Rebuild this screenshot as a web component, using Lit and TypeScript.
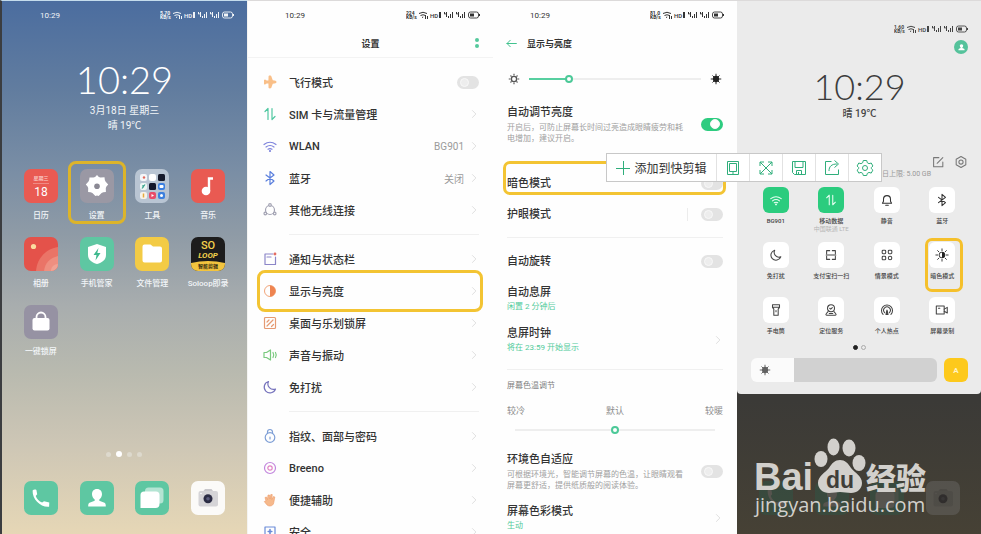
import { LitElement, html, svg, css, nothing } from "lit";
import { customElement, property } from "lit/decorators.js";
import { classMap } from "lit/directives/class-map.js";
import { styleMap } from "lit/directives/style-map.js";

const base = css`
  * { box-sizing: border-box; }
  button { font: inherit; color: inherit; background: none; border: 0; padding: 0; margin: 0; text-align: left; }
  svg { display: block; flex: none; }
`;

/* Artwork for the 34px launcher tiles */
const tileArt: Record<string, unknown> = {
  calendar: svg`<rect width="34" height="34" rx="7" fill="#e95a52"/>
    <text x="17" y="11" font-size="5" text-anchor="middle" fill="#fbd3cf">星期三</text>
    <path d="M9 14.5h16" stroke="#f3a19b" stroke-width=".7"/>
    <text x="17" y="27" font-size="12" font-weight="400" text-anchor="middle" fill="#fff">18</text>`,
  settings: svg`<rect width="34" height="34" rx="7" fill="#9a98a4"/>
    <path d="M17 6q2 2.600 3.600 2.500l3.900-.2q.1 3 1 4.100l2.700 3q-2.300 2-2.400 3.600l.1 3.900q-3 .1-4.300 1.100L18.600 27q-1.600-.8-3.200 0l-3-2.900q-1.300-1-4.300-1.100l.1-3.900q-.1-1.600-2.400-3.600l2.700-3q.9-1.100 1-4.100l3.900.2Q15 8.600 17 6z" fill="#fff"/>
    <circle cx="17" cy="17.200" r="2.800" fill="#8b8994"/>`,
  tools: svg`<rect width="34" height="34" rx="7" fill="#b9c5d3"/>
    <g><rect x="5" y="5" width="7" height="7" rx="2" fill="#f4f6f8"/><rect x="14" y="5" width="7" height="7" rx="2" fill="#fff"/><rect x="23" y="5" width="7" height="7" rx="1.5" fill="#161a2b"/>
    <rect x="5" y="14" width="7" height="7" rx="2" fill="#eef6f4"/><rect x="14" y="14" width="7" height="7" rx="1.5" fill="#12162a"/><rect x="23" y="14" width="7" height="7" rx="2" fill="#3c7fe0"/>
    <rect x="5" y="23" width="7" height="7" rx="2" fill="#f7f3ea"/><rect x="14" y="23" width="7" height="7" rx="2" fill="#e94b68"/><rect x="23" y="23" width="7" height="7" rx="2" fill="#3d80dd"/></g>
    <circle cx="9" cy="8.5" r="1.2" fill="#e0695c"/><path d="M7 19.5l3-4M8 16v3" stroke="#3ba58f" stroke-width="1.2"/><rect x="24.500" y="16" width="4" height="3" rx="1" fill="#fff"/>
    <path d="M8.500 24.500v4" stroke="#e6a93c" stroke-width="1.500"/><path d="M16.500 25v3l2.500-1.500z" fill="#fff"/><circle cx="26.500" cy="26.500" r="1.500" fill="#fff"/>`,
  music: svg`<rect width="34" height="34" rx="7" fill="#e95a52"/>
    <circle cx="15" cy="22" r="4.300" fill="#fff"/><path d="M18 22V9.500h4" stroke="#fff" stroke-width="2.400" fill="none"/>`,
  album: svg`<rect width="34" height="34" rx="7" fill="#e4524a"/>
    <path d="M12 34c1-13 10-22 22-24v17a7 7 0 0 1-7 7z" fill="#ea7467"/><path d="M20 34c1-8 6-13 14-15v8a7 7 0 0 1-7 7z" fill="#ee8f80"/>
    <path d="M27 34c0-4 3-7 7-7a7 7 0 0 1-7 7z" fill="#f0a394"/><circle cx="9.500" cy="9.500" r="2.600" fill="#fbdca0"/>`,
  guard: svg`<rect width="34" height="34" rx="7" fill="#5ec7a2"/>
    <path d="M17 7l9 3v8c0 5-4 7.500-9 9-5-1.500-9-4-9-9v-8z" fill="#fff"/><path d="M18.500 11l-5 7h3l-1 5.500 5-7.500h-3.200z" fill="#3fb98e"/>`,
  files: svg`<rect width="34" height="34" rx="7" fill="#f3cb45"/>
    <path d="M7.500 9.500a2 2 0 0 1 2-2h6l2.500 2h7a2 2 0 0 1 2 2v12a2 2 0 0 1-2 2H9.500a2 2 0 0 1-2-2z" fill="#fff"/>`,
  soloop: svg`<rect width="34" height="34" rx="7" fill="#1d1c1c"/>
    <path d="M0 26q17-4 34 0v1a7 7 0 0 1-7 7H7a7 7 0 0 1-7-7z" fill="#f3c43e"/>
    <text x="17" y="12" font-size="11" font-weight="500" text-anchor="middle" fill="#f3d14c">SO</text>
    <text x="17" y="21" font-size="8" font-weight="700" font-style="italic" text-anchor="middle" fill="#f3d14c">LOOP</text>
    <text x="17" y="31" font-size="5" font-weight="700" text-anchor="middle" fill="#3a2f12">智能剪辑</text>`,
  lock: svg`<rect width="34" height="34" rx="7" fill="#9692a3"/>
    <path d="M12.500 14v-2a4.500 4.500 0 0 1 9 0v2" stroke="#fff" stroke-width="1.800" fill="none"/><rect x="8.500" y="13" width="17" height="12.500" rx="2" fill="#fff"/>`,
  phone: svg`<rect width="34" height="34" rx="7" fill="#5ec7a2"/>
    <path d="M8.600 9.500c.9-.9 2.400-1.200 3.800-.6l.8 4.300-1.500 1.700c1.300 3.100 3.300 5.200 6.400 6.600l1.900-1.300 5.300 1.300-.2 4.200C16.500 26.500 8.300 18.500 8.600 9.500z" fill="#fff"/>`,
  contacts: svg`<rect width="34" height="34" rx="7" fill="#5ec7a2"/>
    <path d="M17 8c3.400 0 5 2.300 5 5.200 0 2.300-1.200 4-2.700 5.300v1.300l5.200 2c1 .5 1.300 1.500 1.300 3.700H8.200c0-2.200.3-3.200 1.300-3.700l5.200-2v-1.300C13.200 17.200 12 15.500 12 13.200 12 10.300 13.600 8 17 8z" fill="#fff"/>`,
  messages: svg`<rect width="34" height="34" rx="7" fill="#5ec7a2"/>
    <rect x="10" y="6.500" width="18.500" height="16" rx="3.500" fill="#b4e4d3"/><path d="M9 10.500h12a3.500 3.500 0 0 1 3.500 3.500v9a4 4 0 0 1-4 4H5.500V14A3.500 3.500 0 0 1 9 10.500z" fill="#fff"/>`,
  camera: svg`<rect width="34" height="34" rx="7" fill="#fbfaf8"/>
    <rect x="7.500" y="10" width="19.500" height="15.500" rx="2" fill="#d5d4d7"/><path d="M12.500 10l1.500-2h6.500l1.500 2z" fill="#c8c7cb"/><circle cx="17" cy="17.700" r="4.500" fill="#2b2c44"/><circle cx="17" cy="17.700" r="1.800" fill="#5a5c7c"/><circle cx="10" cy="12.500" r=".8" fill="#fff"/>`,
};

const line = (color: string, body: unknown) =>
  svg`<g fill="none" stroke=${color} stroke-width="1.200" stroke-linecap="round" stroke-linejoin="round">${body}</g>`;

const wifi = svg`<path d="M2 6.500q6-4.500 12 0M4 9q4-3 8 0M6 11.200q2-1.300 4 0"/><circle cx="8" cy="13" r=".5"/>`;
const bluetooth = svg`<path d="M4 5l8 6-4 3.500v-13L12 5l-8 6"/>`;
const updown = svg`<path d="M3 5.500l3-3v11M13 10.500l-3 3v-11"/>`;
const moon = svg`<path d="M6.500 2.500a5.800 5.800 0 1 0 7 7.500 5.500 5.500 0 0 1-7-7.500z"/>`;

/* 16-unit line icons */
const icons: Record<string, unknown> = {
  plane: svg`<path d="M8 1.500c1.200 0 1.600 1.400 1.700 3.700l4.300 1.600c.6.900.6 1.800 0 2.600l-4.400.2-.2 1.700 1.200 1.600c0 .6-.2.900-.6 1.100H6c-.4-.2-.6-.5-.6-1.100l1.200-1.600-.2-1.700-4.400-.2c-.6-.8-.6-1.700 0-2.600l4.300-1.600C6.400 2.900 6.800 1.500 8 1.500z" fill="#f9bf88" transform="rotate(90 8 8)"/>`,
  sim: line("#4fc7a0", updown),
  wifi: line("#7d83dc", wifi),
  bluetooth: line("#5c80dd", bluetooth),
  other: line("#a3a3b3", svg`<circle cx="8" cy="8" r="4.500"/><circle cx="8" cy="3" r="1.300" fill="#fff"/><circle cx="3.300" cy="11.500" r="1.300" fill="#fff"/><circle cx="12.700" cy="11.500" r="1.300" fill="#fff"/>`),
  notice: line("#8c86c8", svg`<path d="M11 3H3v10.500h10.500V6M5 6h4"/><circle cx="13" cy="3" r=".8" stroke="#e4695e" fill="#e4695e"/>`),
  display: svg`<circle cx="8" cy="8" r="5.500" fill="none" stroke="#f2a67b"/><path d="M8 2.500a5.500 5.500 0 0 1 0 11z" fill="#ee8450"/>`,
  desktop: line("#e59a72", svg`<rect x="2.500" y="2.500" width="11" height="11" rx="1"/><path d="M5 11l6-6M5 7l2-2M9.500 11.500l2-2"/>`),
  sound: line("#79c97e", svg`<path d="M2 5.500h2.500L8.500 3v10l-4-2.500H2zM11 5.500q1.500 2.500 0 5M13.500 5.500q1.500 2.500 0 5"/>`),
  moon: line("#7774bd", moon),
  padlock: line("#7e9fd6", svg`<circle cx="8" cy="9.500" r="4.800"/><path d="M5.500 5.500V4a2.500 2.500 0 0 1 5 0v1.500M8 9v2"/>`),
  breeno: line("#c286dd", svg`<circle cx="8" cy="8" r="5.500"/><circle cx="8" cy="8" r="2.200" stroke="#e184c4"/>`),
  hand: svg`<path d="M4 9L3 5.500 4.500 5l1 2.500L6 3h1.500l.5 4 .8-4.500h1.400L10 7.500l1.500-3 1.300.5-1 5.500c-.3 2.300-1.800 3.500-4 3.500-2.300 0-3.300-1.500-5.500-4.500z" fill="#f6b98c" stroke="#ec9a68" stroke-width=".6"/>`,
  shield: line("#6a8bd8", svg`<path d="M3 3h10v6.500c0 2.500-2 3.500-5 4.500-3-1-5-2-5-4.500z"/><path d="M8 5.500v4M6.200 7.500h3.600" stroke-width="1.600"/>`),
  qwifi: line("#e9fff3", wifi),
  qdata: line("#e9fff3", updown),
  bell: line("#333", svg`<path d="M2.800 11.800h10.400L12 9.500V7a4 4 0 0 0-8 0v2.500zM6.500 14h3"/>`),
  qbt: line("#333", bluetooth),
  qmoon: line("#444", moon),
  scan: line("#444", svg`<path d="M3 6.500V3h3.500M9.500 3H13v3.500M3 9.500V13h3.500M9.500 13H13V9.500M2.500 8h11"/>`),
  scene: line("#444", svg`<rect x="2.500" y="2.500" width="4" height="4" rx="1"/><rect x="9.500" y="2.500" width="4" height="4" rx="1"/><rect x="2.500" y="9.500" width="4" height="4" rx="1"/><circle cx="11.500" cy="11.500" r="2"/>`),
  dark: svg`<circle cx="8" cy="8" r="3.300" fill="#fff" stroke="#222"/><path d="M8 4.700a3.300 3.300 0 0 1 0 6.600z" fill="#222"/><path d="M8 1v2M8 13v2M1 8h2M13 8h2M3 3l1.400 1.400M11.600 11.600L13 13M3 13l1.400-1.400M11.600 4.400L13 3" stroke="#222" stroke-linecap="round"/>`,
  torch: line("#444", svg`<path d="M4 2h8v3l-1.500 2v7h-5V7L4 5zM4 4.800h8M8 8.500v1.500"/>`),
  location: line("#444", svg`<circle cx="8" cy="6" r="4"/><path d="M6.500 6l1.200 1L9.500 5.300M4.600 9.800L2.500 12.300a1 1 0 0 0 .8 1.700h9.400a1 1 0 0 0 .8-1.700l-2.100-2.500M6 12h4"/>`),
  hotspot: line("#444", svg`<path d="M3.500 13a6.300 6.300 0 1 1 9 0M5.300 11a3.800 3.800 0 1 1 5.400 0"/><path d="M8 8l-1.200 5h2.400z" fill="#444"/>`),
  record: line("#444", svg`<rect x="1.500" y="3.500" width="9" height="9"/><path d="M10.500 7l3.500-2v6.500l-3.500-2M4 6h1.500"/>`),
  sun: svg`<circle cx="8" cy="8" r="3.600" fill="#222"/><path d="M8 2v12M2 8h12M4 4l8 8M4 12l8-8" stroke="#222" stroke-width="1.100"/>`,
  dim: svg`<circle cx="8" cy="8" r="3" fill="#fff" stroke="#555" stroke-width="1.500"/><path d="M8 2v2M8 12v2M2 8h2M12 8h2M4 4l1.200 1.200M10.800 10.800L12 12M4 12l1.200-1.200M10.800 5.200L12 4" stroke="#555" stroke-width="1.300"/>`,
  edit: line("#777", svg`<path d="M9 3H3v10.500h10.500V8M7 9.500L13.500 3"/>`),
  hex: line("#777", svg`<path d="M8 1.800l5.500 3.100v6.200L8 14.200l-5.500-3.100V4.900z"/><circle cx="8" cy="8" r="2.400"/>`),
  back: line("#3cc08b", svg`<path d="M14 8H2.500M6.500 4l-4 4 4 4"/>`),
  chevron: line("#d4d4d4", svg`<path d="M5.500 2.500L11 8l-5.500 5.500"/>`),
  person: svg`<path d="M8 2c2 0 3 1.400 3 3 0 1.400-.6 2.400-1.500 3.200v.7l3 1.100c.8.400 1 1.500 1 2.700h-11c0-1.200.2-2.300 1-2.700l3-1.100v-.7C5.600 7.400 5 6.400 5 5c0-1.600 1-3 3-3z" fill="#fff"/>`,
};

/* 18-unit icons of the floating toolbar */
const toolIcons: Record<string, unknown> = {
  device: svg`<path d="M3.500 2.500h11v13h-11zM5.500 4.500h7v8h-7zM8 14h2"/>`,
  expand: svg`<path d="M3 3l12 12M15 3L3 15M3 7V3h4M11 3h4v4M15 11v4h-4M7 15H3v-4"/>`,
  save: svg`<path d="M2.500 2.500h13v13h-11l-2-2zM5 2.500v6h8v-6M6.500 15.500v-4h5v4M8.500 13v2"/>`,
  share: svg`<path d="M8.500 2.500h-6v13h13v-5M6 12c0-4.500 2.500-7 8-7M11.500 1.500L15.500 5l-4 3.500"/>`,
  gear: svg`<circle cx="9" cy="9" r="2.500"/><path d="M7.300 1.500h3.400l.6 2.200 1.700 1 2.200-.7 1.700 3L15.300 8.600v1l1.600 1.500-1.700 3-2.200-.7-1.700 1-.6 2.100H7.300l-.6-2.100-1.700-1-2.200.7-1.700-3 1.600-1.500v-1L1.100 7l1.700-3 2.200.7 1.700-1z"/>`,
};

const icon = (name: string, size = 16) =>
  html`<svg width=${size} height=${size} viewBox="0 0 16 16" aria-hidden="true">${icons[name]}</svg>`;

const tile = (name: string) =>
  html`<svg width="34" height="34" viewBox="0 0 34 34" aria-hidden="true">${tileArt[name]}</svg>`;

@customElement("status-bar")
class StatusBar extends LitElement {
  @property() time = "";
  @property() speed = "";
  static styles = [base, css`
    :host { display: flex; justify-content: space-between; align-items: center; height: 28px; padding: 0 13px 0 37px; font-size: 8px; flex: none; }
  `];
  render() {
    return html`<span>${this.time}</span>
      <svg width="74" height="10" viewBox="0 0 74 10" fill="currentColor" aria-label="网络与电量">
        <text x="0" y="4.500" font-size="5" font-weight="700">${this.speed}</text>
        <text x="0" y="9.300" font-size="5" font-weight="700">KB/s</text>
        <g fill="none" stroke="currentColor" stroke-width="1"><path d="M13 3.500q4-2.500 8 0M14.500 5.500q2.500-1.500 5 0M16 7.500l1.200-.5M19.500 5v4M21.500 6v3"/></g>
        <text x="24" y="7.500" font-size="6" font-weight="500">HD</text><path d="M33 2h2v6h-2z"/>
        ${[38, 50].map((x) => svg`<g transform="translate(${x} 0)"><path d="M0 2h1v2H0zM2 2h1v5H2zM4 6h1v2H4zM6 4h1v4H6zM8 2h1v6H8z"/><path d="M0 3.500h3v.8H0z"/></g>`)}
        <rect x="62.500" y="2" width="10" height="6" rx="2" fill="none" stroke="currentColor" stroke-width=".9"/><rect x="64" y="3.500" width="4" height="3"/><rect x="73" y="4" width="1" height="2"/>
      </svg>`;
  }
}

@customElement("home-screen")
class HomeScreen extends LitElement {
  apps = [
    ["calendar", "日历"], ["settings", "设置"], ["tools", "工具"], ["music", "音乐"],
    ["album", "相册"], ["guard", "手机管家"], ["files", "文件管理"], ["soloop", "Soloop即录"],
    ["lock", "一键锁屏"],
  ];
  static styles = [base, css`
    :host { display: flex; flex-direction: column; color: #f2f5f8; border-left: 2px solid #3b3d40; border-right: 1px solid #f4f4f2; border-top: 1px solid #c4dcec;
      background: linear-gradient(#4b6d9f 0%, #627d9f 17%, #7a8ea5 32%, #8f9ba6 44%, #a8adae 57%, #b9baaf 70%, #cdc6b5 83%, #e6d7b6 100%); }
    status-bar { padding-left: 38px; }
    .clock { margin-top: 30px; text-align: center; font: 300 38px/40px Lato, sans-serif; color: #fff; }
    .info { margin-top: 4px; text-align: center; font-size: 10px; line-height: 15px; }
    .apps, .dock { display: grid; grid-template-columns: repeat(4, 1fr); padding: 0 11px; }
    .apps { margin-top: 36px; row-gap: 14px; }
    .app { position: relative; display: flex; flex-direction: column; align-items: center; gap: 6px; font-size: 8px; line-height: 14px; white-space: nowrap; font-weight: 500; }
    .marked::after { content: ""; position: absolute; inset: -8px -1px -1px; border: 3px solid #dcb42a; border-radius: 8px; }
    .dots { margin-top: auto; display: flex; justify-content: center; gap: 5px; align-items: center; height: 8px; padding-right: 2px; }
    .dot { width: 5px; height: 5px; border-radius: 50%; background: #ddd9cd; }
    .dot.on { width: 6px; height: 6px; background: #fff; }
    .dock { margin-top: 23px; padding-bottom: 19px; }
  `];
  render() {
    return html`
      <status-bar time="10:29" speed="5.70"></status-bar>
      <div class="clock">10:29</div>
      <div class="info">3月18日 星期三<br>晴 19℃</div>
      <div class="apps">
        ${this.apps.map(([art, name]) => html`
          <button class=${classMap({ app: true, marked: art === "settings" })}>${tile(art)}<span>${name}</span></button>`)}
      </div>
      <div class="dots">${[0, 1, 0, 0].map((on) => html`<i class=${classMap({ dot: true, on: !!on })}></i>`)}</div>
      <div class="dock">
        ${[["phone", "电话"], ["contacts", "联系人"], ["messages", "信息"], ["camera", "相机"]].map(
          ([art, name]) => html`<button class="app" aria-label=${name}>${tile(art)}</button>`)}
      </div>`;
  }
}

const pageStyles = css`
  :host { display: flex; flex-direction: column; background: #fefefe; color: #333; font-size: 11px; border-top: 1px solid #dcdada; overflow: hidden; }
  .header { flex: none; height: 28px; display: flex; align-items: center; font-size: 9px; font-weight: 700; }
  .header h1 { font: inherit; font-size: 9px; margin: 0; }
  .switch { appearance: none; flex: none; width: 22px; height: 13px; margin: 0; border-radius: 7px; background: #e3e3e3; display: grid; align-items: center; padding: 0 3px; }
  .switch::before { content: ""; width: 7px; height: 7px; border-radius: 50%; border: 1px solid #f8f8f8; background: #ededed; }
  .switch:checked { background: #2ecc80; }
  .switch:checked::before { justify-self: end; width: 8px; height: 8px; background: #fff; }
  hr { flex: none; border: 0; height: 1px; background: #f0f0f0; margin: 0; }
`;

@customElement("settings-screen")
class SettingsScreen extends LitElement {
  groups = [
    [["plane", "飞行模式", "switch"], ["sim", "SIM 卡与流量管理"], ["wifi", "WLAN", "BG901"], ["bluetooth", "蓝牙", "关闭"], ["other", "其他无线连接"]],
    [["notice", "通知与状态栏"], ["display", "显示与亮度"], ["desktop", "桌面与乐划锁屏"], ["sound", "声音与振动"], ["moon", "免打扰"]],
    [["padlock", "指纹、面部与密码"], ["breeno", "Breeno"], ["hand", "便捷辅助"], ["shield", "安全"]],
  ];
  static styles = [base, pageStyles, css`
    .header { position: relative; justify-content: center; border-bottom: 1px solid #f3f3f3; height: 29px; margin-bottom: 8px; }
    .more { position: absolute; right: 14px; display: grid; gap: 2px; }
    .more i { width: 4px; height: 4px; border-radius: 50%; background: #55c99c; }
    .row { position: relative; flex: none; width: 100%; height: 32px; display: flex; align-items: center; padding: 0 14px; font-weight: 500; }
    .row svg:first-child { margin-right: 11px; }
    .name { flex: 1; }
    .value { font-size: 10px; color: #9a9a9a; margin-right: 5px; font-weight: 400; }
    hr { margin: 8px 14px 8px 41px; }
    .marked::after { content: ""; position: absolute; inset: -5px 10px -5px 9px; border: 3px solid #f3c433; border-radius: 8px; }
  `];
  row([art, name, value]: string[]) {
    if (value === "switch") {
      return html`<label class="row">${icon(art)}<span class="name">${name}</span><input class="switch" type="checkbox"></label>`;
    }
    return html`<button class=${classMap({ row: true, marked: art === "display" })}>
      ${icon(art)}<span class="name">${name}</span>${value ? html`<span class="value">${value}</span>` : nothing}${icon("chevron", 10)}
    </button>`;
  }
  render() {
    return html`
      <status-bar time="10:29" speed="224"></status-bar>
      <div class="header"><h1>设置</h1><button class="more" aria-label="更多"><i></i><i></i></button></div>
      ${this.groups.map((rows, n) => html`${n ? html`<hr>` : nothing}${rows.map((r) => this.row(r))}`)}`;
  }
}

@customElement("display-screen")
class DisplayScreen extends LitElement {
  static styles = [base, pageStyles, css`
    .header { padding-left: 12px; gap: 9px; }
    .header h1 { font-size: 9px; }
    section { flex: none; display: flex; flex-direction: column; gap: 11px; padding: 0 14px; }
    .brightness { padding-top: 8px; }
    .modes { padding-top: 27px; padding-bottom: 11px; gap: 7px; }
    .screen { padding-top: 11px; padding-bottom: 14px; }
    .warmth { padding-top: 10px; gap: 5px; }
    .color { padding-top: 14px; gap: 12px; }
    hr { margin: 0 14px; }
    .level { display: flex; align-items: center; gap: 8px; height: 28px; }
    .range { appearance: none; flex: 1; min-width: 0; margin: 0; height: 16px; background: none; }
    .range::-webkit-slider-runnable-track { height: 2px; background: linear-gradient(to right, #57cfa0 var(--fill), #eeeeee var(--fill)); }
    .range::-webkit-slider-thumb { appearance: none; width: 8px; height: 8px; margin-top: -3px; border-radius: 50%; background: #fff; border: 2px solid #4cc998; }
    .row { position: relative; display: flex; align-items: center; justify-content: space-between; min-height: 24px; width: 100%; }
    .title { display: block; padding-top: 2px; line-height: 14px; font-weight: 500; }
    .note { display: block; width: 180px; padding-top: 2px; font-size: 8px; line-height: 11px; color: #a0a0a0; }
    .state { display: block; font-size: 8px; line-height: 14px; color: #52cb9b; }
    .marked::after { content: ""; position: absolute; inset: -10px -3px 0 -4px; border: 3px solid #f3c433; border-radius: 7px; }
    .split { border-left: 1px solid #ececec; padding-left: 13px; }
    .caption { padding-bottom: 7px; font-size: 8px; line-height: 12px; color: #808080; }
    .ends { display: flex; justify-content: space-between; font-size: 9px; line-height: 14px; color: #8c8c8c; }
    .warm { flex: none; height: 14px; margin: 0 8px; }
  `];
  toggle(title: string, on = false, note = "", extra: Record<string, boolean> = {}) {
    return html`<label class=${classMap({ row: true, ...extra })}>
      <span><span class="title">${title}</span>${note ? html`<span class="note">${note}</span>` : nothing}</span>
      <span class=${classMap({ split: !!extra.divided })}><input class="switch" type="checkbox" .checked=${on}></span>
    </label>`;
  }
  link(title: string, state: string, arrow = true) {
    return html`<button class="row"><span><span class="title">${title}</span><span class="state">${state}</span></span>
      ${arrow ? icon("chevron", 10) : nothing}</button>`;
  }
  render() {
    return html`
      <status-bar time="10:29" speed="81.0"></status-bar>
      <div class="header"><button aria-label="返回">${icon("back", 13)}</button><h1>显示与亮度</h1></div>
      <section class="brightness">
        <div class="level">${icon("dim", 14)}<input class="range" type="range" aria-label="亮度" value="22" style=${styleMap({ "--fill": "22%" })}>${icon("sun", 14)}</div>
        ${this.toggle("自动调节亮度", true, "开启后，可防止屏幕长时间过亮造成眼睛疲劳和耗电增加，建议开启。")}
      </section>
      <section class="modes">
        ${this.toggle("暗色模式", false, "", { marked: true })}
        ${this.toggle("护眼模式", false, "", { divided: true })}
      </section>
      <hr>
      <section class="screen">
        ${this.toggle("自动旋转")}
        ${this.link("自动息屏", "闲置 2 分钟后", false)}
        ${this.link("息屏时钟", "将在 23:59 开始显示")}
      </section>
      <hr>
      <section class="warmth">
        <div class="caption">屏幕色温调节</div>
        <div class="ends"><span>较冷</span><span>默认</span><span>较暖</span></div>
        <input class="range warm" type="range" aria-label="屏幕色温" value="50" style=${styleMap({ "--fill": "0%" })}>
      </section>
      <section class="color">
        ${this.toggle("环境色自适应", false, "可根据环境光，智能调节屏幕的色温，让眼睛观看屏幕更舒适，提供纸质般的阅读体验。")}
        ${this.link("屏幕色彩模式", "生动")}
      </section>`;
  }
}

@customElement("control-center")
class ControlCenter extends LitElement {
  toggles = [
    ["qwifi", "BG901"], ["qdata", "移动数据", "中国联通 LTE"], ["bell", "静音"], ["qbt", "蓝牙"],
    ["qmoon", "免打扰"], ["scan", "支付宝扫一扫"], ["scene", "情景模式"], ["dark", "暗色模式"],
    ["torch", "手电筒"], ["location", "定位服务"], ["hotspot", "个人热点"], ["record", "屏幕录制"],
  ];
  static styles = [base, css`
    :host { display: flex; flex-direction: column; background: linear-gradient(#3b3a37 75%, #464135); color: #444; }
    .shade { flex: none; display: flex; flex-direction: column; background: #ebebeb; border-top: 1px solid #dcdada; border-radius: 0 0 4px 4px; padding: 14px 13px 12px 14px; }
    status-bar { padding: 0; }
    .avatar { align-self: flex-end; width: 14px; height: 14px; margin-top: -3px; border-radius: 50%; background: #55c29b; display: grid; place-items: center; }
    .clock { margin-top: 12px; text-align: center; font: 300 36px/40px Lato, sans-serif; color: #3c3c3c; }
    .weather { text-align: center; font-size: 10px; line-height: 15px; font-weight: 500; }
    .actions { margin-top: 34px; display: flex; justify-content: flex-end; gap: 9px; }
    .quota { align-self: flex-end; padding-right: 37px; font-size: 7px; line-height: 10px; color: #999; }
    .grid { margin: 8px -2px 0 -3px; display: grid; grid-template: 55px 55px auto / repeat(4, 1fr); }
    .item { position: relative; display: flex; flex-direction: column; align-items: center; font-size: 6px; line-height: 9px; white-space: nowrap; font-weight: 500; }
    .pad { width: 26px; height: 26px; margin-bottom: 3px; border-radius: 6px; background: #fff; display: grid; place-items: center; }
    .on .pad { background: #2bcc7e; }
    .sub { line-height: 8px; color: #b5b5b5; font-weight: 400; }
    .marked::after { content: ""; position: absolute; inset: -4px 7px 5px 10px; border: 3px solid #f5c02b; border-radius: 7px; }
    .dots { display: flex; justify-content: center; gap: 3px; margin-top: 10px; }
    .dots i { width: 5px; height: 5px; border-radius: 50%; border: 1px solid #aaa; }
    .dots i:first-child { background: #222; border-color: #222; }
    .light { margin-top: 8px; display: flex; gap: 7px; }
    .track { position: relative; flex: 1; height: 24px; }
    .range { appearance: none; display: block; width: 100%; height: 24px; margin: 0; border-radius: 6px; background: linear-gradient(to right, #fbfbfb var(--fill), #d1d1d1 var(--fill)); }
    .range::-webkit-slider-thumb { appearance: none; width: 1px; height: 24px; }
    .track svg { position: absolute; left: 7px; top: 5px; opacity: 0.7; }
    .auto { width: 24px; height: 24px; border-radius: 6px; background: #fdc91c; color: #fff3c4; font-size: 8px; font-weight: 700; text-align: center; }
    .backdrop { position: relative; flex: 1; display: flex; flex-direction: column; justify-content: flex-end; }
    .dock { display: grid; grid-template-columns: repeat(4, 1fr); justify-items: center; padding: 0 10px 19px 11px; filter: brightness(0.45); }
    .dock svg { opacity: 0.4; }
    .mark { position: absolute; left: 16px; bottom: 10px; }
  `];
  render() {
    return html`
      <div class="shade">
        <status-bar speed="1.60"></status-bar>
        <button class="avatar" aria-label="用户">${icon("person", 9)}</button>
        <div class="clock">10:29</div>
        <div class="weather">晴 19℃</div>
        <div class="actions"><button aria-label="编辑">${icon("edit", 14)}</button><button aria-label="设置">${icon("hex", 14)}</button></div>
        <div class="quota">日上限: 5.00 GB</div>
        <div class="grid">
          ${this.toggles.map(([art, name, sub], n) => html`
            <button class=${classMap({ item: true, on: n < 2, marked: art === "dark" })}>
              <span class="pad">${icon(art, 14)}</span><span>${name}</span>${sub ? html`<span class="sub">${sub}</span>` : nothing}
            </button>`)}
        </div>
        <div class="dots"><i></i><i></i></div>
        <div class="light">
          <div class="track"><input class="range" type="range" aria-label="亮度" value="23" style=${styleMap({ "--fill": "23%" })}>${icon("sun", 14)}</div>
          <button class="auto">A</button>
        </div>
      </div>
      <div class="backdrop">
        <div class="dock">${["phone", "contacts", "messages", "camera"].map((name) => tile(name))}</div>
        <svg class="mark" width="180" height="92" viewBox="0 0 180 92" fill="#d2d0cc" aria-label="Baidu经验">
          <text x="1" y="58" font-family="Liberation Sans" font-weight="700" font-size="38">Bai</text>
          <ellipse cx="68" cy="27" rx="6.500" ry="8"/><ellipse cx="80.500" cy="15" rx="6" ry="8.500"/><ellipse cx="96" cy="16" rx="6.500" ry="8.500"/><ellipse cx="106" cy="31" rx="6.500" ry="8"/>
          <path d="M87 28c5 0 8 3 11 8 4 5 11 8 11 15 0 6-5 10-11 10-4 0-7-1-11-1s-7 1-11 1c-6 0-11-4-11-10 0-7 7-10 11-15 3-5 6-8 11-8z"/>
          <text x="87" y="56" text-anchor="middle" font-family="Liberation Sans" font-weight="700" font-size="23" fill="#3f3e3a">du</text>
          <text x="113" y="57" font-family="Noto Sans CJK SC" font-weight="900" font-size="30">经验</text>
          <text x="2" y="80" font-family="Open Sans" font-size="20" font-weight="500">jingyan.baidu.com</text>
        </svg>
      </div>`;
  }
}

@customElement("app-root")
class AppRoot extends LitElement {
  static styles = [base, css`
    :host { position: relative; display: grid; grid-template: 100vh / 248fr 245fr 244fr 244fr; overflow: hidden; background: #fff; font-family: Roboto, "Noto Sans CJK SC", sans-serif; }
    .toolbar { position: absolute; left: calc(50% + 115px); top: 153px; display: flex; height: 29px; background: #fff; border: 1px solid #c8c8c8; z-index: 1; }
    .toolbar button { display: flex; align-items: center; justify-content: center; gap: 5px; width: 33px; border-left: 1px solid #e2e2e2; }
    .toolbar .add { width: auto; padding: 0 9px; border-left: 0; font-size: 12px; color: #333; white-space: nowrap; }
    .toolbar svg { fill: none; stroke: #2fae7b; stroke-width: 1; }
  `];
  render() {
    return html`
      <home-screen></home-screen>
      <settings-screen></settings-screen>
      <display-screen></display-screen>
      <control-center></control-center>
      <div class="toolbar">
        <button class="add"><svg width="14" height="14" viewBox="0 0 14 14"><path d="M7.500 0v14M0 7.500h14"/></svg>添加到快剪辑</button>
        ${Object.entries(toolIcons).map(([name, art]) => html`
          <button aria-label=${name}><svg width="18" height="18" viewBox="0 0 18 18">${art}</svg></button>`)}
      </div>`;
  }
}
